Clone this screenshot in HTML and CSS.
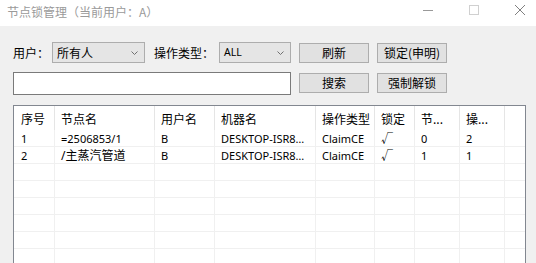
FILE: index.html
```html
<!DOCTYPE html>
<html>
<head>
    <meta charset="UTF-8">
    <title>节点锁管理</title>
    <link rel="stylesheet" href="styles.css">
</head>
<body>
    <div class="window">
        <div class="titlebar">
            <span class="title">节点锁管理（当前用户：A）</span>
            <div class="win-btns">
                <svg class="win-min" viewBox="0 0 10 10"><line x1="0" y1="5.5" x2="10" y2="5.5"/></svg>
                <svg class="win-max" viewBox="0 0 10 10"><rect x="0.5" y="0.5" width="9" height="9"/></svg>
                <svg class="win-close" viewBox="0 0 10 10"><path d="M0 0L10 10M10 0L0 10"/></svg>
            </div>
        </div>
        <div class="client">
            <div class="row">
                <label class="lbl lbl-user">用户：</label>
                <div class="combo combo-user">
                    <span>所有人</span>
                    <svg class="chev" viewBox="0 0 7 4"><path d="M0.5 0.5L3.5 3.5L6.5 0.5"/></svg>
                </div>
                <label class="lbl lbl-op">操作类型：</label>
                <div class="combo combo-op">
                    <span class="latin">ALL</span>
                    <svg class="chev" viewBox="0 0 7 4"><path d="M0.5 0.5L3.5 3.5L6.5 0.5"/></svg>
                </div>
                <button class="btn">刷新</button>
                <button class="btn">锁定(申明)</button>
            </div>
            <div class="row row-search">
                <input type="text" class="search">
                <button class="btn">搜索</button>
                <button class="btn">强制解锁</button>
            </div>
            <div class="list">
                <div class="list-head">
                    <div class="cell">序号</div>
                    <div class="cell">节点名</div>
                    <div class="cell">用户名</div>
                    <div class="cell">机器名</div>
                    <div class="cell">操作类型</div>
                    <div class="cell">锁定</div>
                    <div class="cell">节...</div>
                    <div class="cell">操...</div>
                    <div class="cell"></div>
                </div>
                <div class="list-row">
                    <div class="cell">1</div>
                    <div class="cell">=2506853/1</div>
                    <div class="cell">B</div>
                    <div class="cell host">DESKTOP-ISR8KQ1</div>
                    <div class="cell">ClaimCE</div>
                    <div class="cell check">√</div>
                    <div class="cell">0</div>
                    <div class="cell">2</div>
                    <div class="cell"></div>
                </div>
                <div class="list-row">
                    <div class="cell">2</div>
                    <div class="cell zh">/主蒸汽管道</div>
                    <div class="cell">B</div>
                    <div class="cell host">DESKTOP-ISR8KQ1</div>
                    <div class="cell">ClaimCE</div>
                    <div class="cell check">√</div>
                    <div class="cell">1</div>
                    <div class="cell">1</div>
                    <div class="cell"></div>
                </div>
                <div class="list-row"><div class="cell"></div><div class="cell"></div><div class="cell"></div><div class="cell"></div><div class="cell"></div><div class="cell"></div><div class="cell"></div><div class="cell"></div><div class="cell"></div></div>
                <div class="list-row"><div class="cell"></div><div class="cell"></div><div class="cell"></div><div class="cell"></div><div class="cell"></div><div class="cell"></div><div class="cell"></div><div class="cell"></div><div class="cell"></div></div>
                <div class="list-row"><div class="cell"></div><div class="cell"></div><div class="cell"></div><div class="cell"></div><div class="cell"></div><div class="cell"></div><div class="cell"></div><div class="cell"></div><div class="cell"></div></div>
                <div class="list-row"><div class="cell"></div><div class="cell"></div><div class="cell"></div><div class="cell"></div><div class="cell"></div><div class="cell"></div><div class="cell"></div><div class="cell"></div><div class="cell"></div></div>
                <div class="list-row"><div class="cell"></div><div class="cell"></div><div class="cell"></div><div class="cell"></div><div class="cell"></div><div class="cell"></div><div class="cell"></div><div class="cell"></div><div class="cell"></div></div>
                <div class="list-row"><div class="cell"></div><div class="cell"></div><div class="cell"></div><div class="cell"></div><div class="cell"></div><div class="cell"></div><div class="cell"></div><div class="cell"></div><div class="cell"></div></div>
            </div>
        </div>
    </div>
</body>
</html>
```

FILE: styles.css
```css
body {
    margin: 0;
    background: #f0f0f0;
    font-family: "Noto Sans CJK SC", sans-serif;
    font-size: 12px;
    color: #000;
}

.window {
    width: 536px;
    height: 263px;
    overflow: hidden;
    background: #f0f0f0;
}

.titlebar {
    height: 26px;
    background: #fff;
    display: flex;
    justify-content: space-between;
    padding: 0 11px 0 7px;
}

.title {
    color: #9a9a9a;
    line-height: 24px;
}

.win-btns {
    display: flex;
    gap: 36px;
    margin-top: 5px;
}

.win-btns svg {
    display: block;
    width: 10px;
    height: 10px;
    fill: none;
    stroke-width: 1;
}

.win-min { stroke: #999; }
.win-max { stroke: #d0d0d0; }
.win-close { stroke: #808080; }

.client {
    padding: 16px 0 0 13px;
}

.row {
    display: flex;
    align-items: flex-start;
    height: 21px;
}

.row-search {
    margin-top: 9px;
    height: 23px;
}

.lbl {
    line-height: 21px;
    white-space: nowrap;
}

.lbl-user {
    width: 39px;
}

.lbl-op {
    width: 65px;
    margin-left: 9px;
}

.combo {
    box-sizing: border-box;
    height: 21px;
    border: 1px solid #adadad;
    background: #e5e5e5;
    display: flex;
    align-items: center;
    justify-content: space-between;
    padding: 0 6px 0 4px;
    line-height: 19px;
}

.combo-user { width: 93px; }
.combo-op { width: 72px; }

.latin {
    font-family: "Noto Sans", sans-serif;
    font-size: 10.5px;
}

.chev {
    width: 7px;
    height: 4px;
    fill: none;
    stroke: #707070;
    stroke-width: 1;
}

.btn {
    box-sizing: border-box;
    width: 70px;
    height: 20px;
    margin: 1px 0 0 8px;
    padding: 0;
    border: 1px solid #adadad;
    background: #e1e1e1;
    font-family: "Noto Sans CJK SC", sans-serif;
    font-size: 12px;
    line-height: 18px;
    color: #000;
}

.search {
    box-sizing: border-box;
    width: 278px;
    height: 23px;
    margin: 0;
    padding: 0 3px;
    border: 1px solid #7a7a7a;
    background: #fff;
}

.list {
    box-sizing: border-box;
    width: 513px;
    height: 200px;
    margin-top: 10px;
    border: 1px solid #828790;
    border-bottom: none;
    background: #fff;
}

.list-head,
.list-row {
    display: grid;
    grid-template-columns: 41px 100px 60px 101px 59px 40px 45px 45px 20px;
}

.cell {
    box-sizing: border-box;
    white-space: nowrap;
    overflow: hidden;
    text-overflow: ellipsis;
    padding-left: 6px;
}

.cell:first-child {
    padding-left: 7px;
}

.list-head .cell {
    height: 24px;
    padding-top: 2px;
    line-height: 22px;
    border-right: 1px solid #e5e5e5;
}

.list-row {
    border-bottom: 1px solid #f0f0f0;
}

.list-row .cell {
    height: 16px;
    padding-top: 1px;
    padding-right: 4px;
    line-height: 15px;
    font-family: "Noto Sans", "Noto Sans CJK SC", sans-serif;
    font-size: 11px;
    border-right: 1px solid #f0f0f0;
}

.list-row .host {
    padding-right: 8px;
}

.list-head .cell:last-child,
.list-row .cell:last-child {
    border-right: none;
}

.list-row .zh {
    font-size: 12px;
}

.list-row .check {
    font-size: 12px;
}
```
